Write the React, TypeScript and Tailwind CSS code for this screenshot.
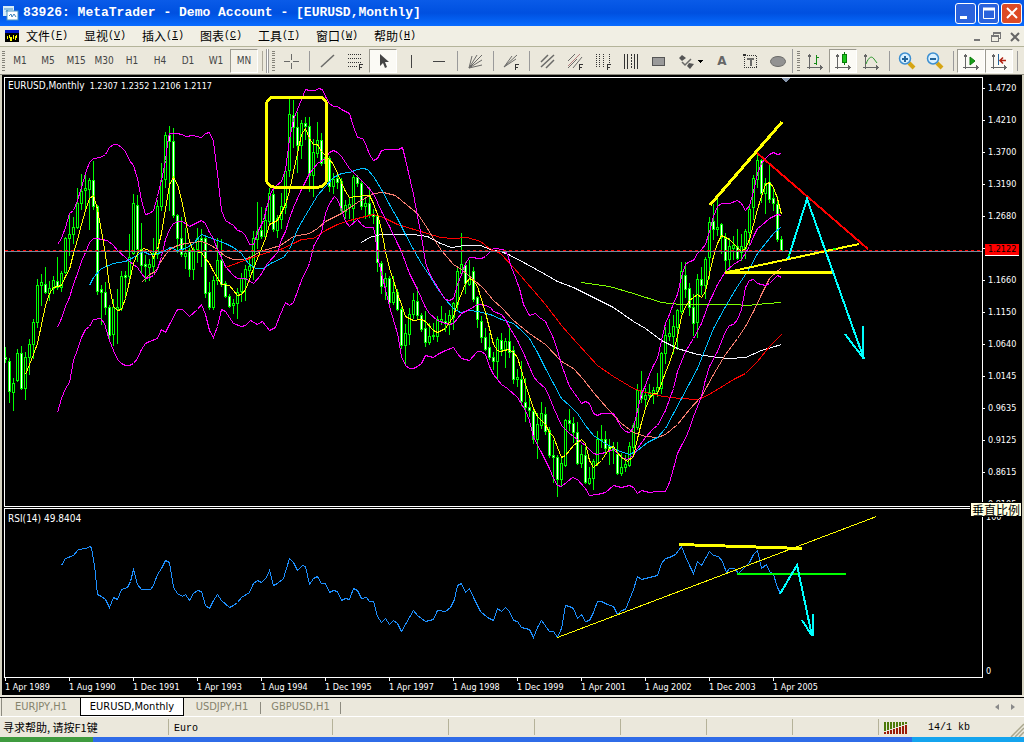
import React from 'react';
import clsx from 'clsx';

// high, body top, body bottom, low, falling (1) or rising (0)
const CANDLES: number[][] = [
  [347, 357, 359, 362, 1], [358, 361, 391, 402, 1], [378, 383, 392, 410, 0], [349, 353, 380, 381, 0], [346, 353, 388, 389, 1],
  [352, 357, 388, 399, 0], [339, 344, 357, 374, 0], [319, 322, 344, 358, 0], [279, 285, 322, 327, 0], [274, 282, 285, 305, 0],
  [267, 284, 292, 293, 1], [281, 288, 293, 300, 0], [276, 280, 288, 293, 0], [257, 281, 287, 289, 1], [271, 273, 287, 291, 0],
  [237, 238, 272, 273, 0], [214, 234, 238, 255, 0], [217, 227, 234, 243, 0], [188, 203, 227, 228, 0], [174, 191, 203, 209, 0],
  [172, 188, 190, 209, 0], [178, 180, 189, 229, 0], [161, 180, 206, 209, 1], [205, 206, 291, 294, 1], [285, 289, 292, 324, 1],
  [282, 292, 307, 314, 1], [305, 307, 335, 339, 1], [299, 307, 334, 345, 0], [289, 307, 309, 343, 0], [271, 276, 308, 310, 0],
  [271, 275, 277, 299, 1], [234, 257, 276, 278, 0], [194, 203, 253, 254, 0], [195, 205, 249, 261, 1], [223, 249, 265, 273, 1],
  [255, 264, 266, 281, 1], [259, 264, 267, 280, 0], [238, 253, 266, 272, 0], [200, 206, 254, 258, 0], [163, 180, 206, 210, 0],
  [132, 135, 179, 187, 0], [126, 135, 141, 210, 1], [128, 141, 215, 217, 1], [214, 215, 238, 252, 1], [217, 238, 254, 256, 1],
  [228, 253, 256, 268, 0], [248, 250, 269, 276, 1], [247, 249, 269, 279, 0], [228, 238, 249, 262, 0], [229, 238, 240, 266, 1],
  [235, 238, 293, 297, 1], [282, 292, 307, 309, 1], [276, 280, 307, 309, 0], [238, 260, 280, 284, 0], [239, 260, 284, 286, 1],
  [281, 283, 296, 297, 1], [294, 296, 306, 307, 1], [299, 303, 305, 313, 0], [288, 292, 303, 318, 0], [273, 278, 291, 301, 0],
  [265, 269, 279, 300, 0], [256, 266, 270, 276, 0], [231, 238, 267, 279, 0], [202, 231, 239, 248, 0], [207, 230, 236, 238, 1],
  [208, 220, 236, 239, 0], [188, 193, 221, 223, 0], [188, 194, 229, 231, 1], [215, 218, 230, 237, 0], [193, 206, 219, 228, 0],
  [166, 171, 207, 213, 0], [99, 114, 170, 176, 0], [100, 115, 127, 147, 1], [112, 127, 145, 172, 1], [120, 123, 145, 158, 0],
  [117, 123, 126, 139, 1], [117, 126, 175, 191, 1], [139, 152, 175, 196, 0], [122, 140, 153, 157, 0], [133, 140, 163, 165, 1],
  [151, 157, 163, 176, 0], [156, 158, 186, 191, 1], [173, 179, 186, 193, 0], [176, 178, 182, 188, 1], [178, 181, 210, 213, 1],
  [200, 205, 211, 218, 0], [198, 204, 207, 218, 0], [175, 177, 208, 221, 0], [175, 177, 183, 186, 1], [180, 183, 206, 209, 1],
  [198, 203, 206, 218, 0], [187, 203, 214, 217, 1], [209, 214, 216, 223, 1], [213, 216, 262, 271, 1], [261, 263, 286, 293, 1],
  [273, 278, 286, 299, 0], [276, 278, 302, 304, 1], [276, 292, 302, 304, 0], [289, 292, 309, 310, 1], [307, 309, 345, 348, 1],
  [324, 333, 345, 363, 0], [308, 314, 334, 344, 0], [293, 300, 314, 318, 0], [287, 301, 315, 318, 1], [313, 315, 329, 331, 1],
  [311, 328, 342, 346, 1], [323, 336, 342, 344, 0], [323, 335, 336, 339, 0], [316, 319, 336, 341, 0], [306, 319, 321, 324, 0],
  [313, 321, 323, 331, 1], [310, 315, 324, 334, 0], [302, 303, 317, 329, 0], [268, 271, 304, 309, 0], [233, 264, 273, 274, 0],
  [262, 265, 283, 293, 1], [260, 279, 284, 285, 0], [267, 271, 299, 301, 1], [296, 297, 319, 327, 1], [316, 321, 337, 342, 1],
  [328, 337, 349, 350, 1], [333, 347, 357, 359, 1], [352, 357, 361, 369, 1], [337, 339, 361, 378, 0], [333, 340, 349, 355, 1],
  [338, 341, 349, 367, 0], [325, 341, 352, 357, 1], [346, 350, 379, 383, 1], [369, 377, 379, 386, 0], [361, 379, 401, 405, 1],
  [378, 402, 407, 421, 1], [396, 407, 410, 416, 1], [407, 411, 439, 443, 1], [413, 424, 439, 458, 0], [402, 413, 425, 428, 0],
  [407, 414, 431, 434, 1], [427, 430, 455, 457, 1], [440, 455, 457, 482, 1], [455, 457, 479, 496, 1], [458, 463, 479, 486, 0],
  [419, 420, 465, 466, 0], [409, 420, 423, 430, 1], [417, 423, 432, 442, 1], [422, 432, 463, 464, 1], [445, 454, 463, 467, 0],
  [447, 455, 482, 483, 1], [467, 478, 483, 484, 0], [459, 461, 478, 489, 0], [431, 439, 463, 465, 0], [425, 439, 440, 447, 0],
  [431, 439, 448, 453, 1], [439, 446, 449, 464, 1], [442, 448, 450, 463, 0], [442, 454, 473, 474, 1], [453, 467, 473, 475, 0],
  [455, 464, 467, 471, 0], [442, 446, 465, 466, 0], [423, 425, 447, 455, 0], [384, 390, 427, 429, 0], [371, 390, 398, 402, 1],
  [388, 395, 399, 407, 0], [384, 392, 395, 398, 0], [387, 390, 393, 403, 0], [373, 387, 391, 396, 0], [352, 353, 388, 393, 0],
  [327, 335, 353, 363, 0], [319, 333, 336, 340, 0], [315, 326, 336, 353, 0], [309, 310, 327, 349, 0], [262, 271, 311, 313, 0],
  [262, 275, 289, 297, 1], [283, 288, 307, 315, 1], [294, 307, 323, 335, 1], [274, 279, 322, 337, 0], [267, 279, 285, 294, 1],
  [257, 259, 285, 298, 0], [217, 222, 257, 278, 0], [204, 221, 229, 239, 1], [198, 227, 229, 235, 0], [223, 224, 237, 253, 1],
  [233, 238, 260, 273, 1], [238, 246, 259, 273, 0], [236, 245, 248, 259, 0], [229, 246, 258, 259, 1], [234, 246, 252, 260, 0],
  [229, 231, 248, 258, 0], [204, 209, 232, 245, 0], [175, 178, 207, 219, 0], [153, 160, 179, 187, 0], [159, 160, 193, 202, 1],
  [178, 183, 193, 213, 0], [165, 182, 199, 202, 1], [188, 198, 203, 210, 1], [196, 204, 239, 241, 1], [236, 239, 251, 251, 1],
];

const BAND_UPPER =
  '57,244 61,238 65,227 69,213 73,210 77,200 81,187 85,173 89,162 93,158 100,157 105,154 109,147 113,144 117,144 121,147 125,151 129,160 133,165 137,178 141,200 145,214 149,213 153,210 157,196 161,180 165,160 167,143 169,133 177,133 181,134 186,136 192,135 201,137 205,133 209,132 213,141 217,173 221,210 225,220 233,225 237,230 241,231 245,235 249,244 253,244 258,230 263,220 267,204 271,191 276,185 281,181 285,169 289,139 293,119 297,109 301,99 305,89 309,90 315,90 318,88 322,89 325,96 329,103 333,106 337,106 341,109 349,113 353,126 357,137 362,138 365,143 369,154 373,160 377,158 381,150 387,149 398,149 402,147 405,159 413,194 417,216 421,236 425,262 429,273 433,280 441,293 445,299 449,300 453,298 457,284 461,274 465,263 469,257 473,257 477,258 481,258 485,256 489,252 493,248 503,249 507,254 511,267 515,277 519,288 523,304 529,315 535,313 539,317 545,321 553,338 557,350 561,364 565,375 569,386 577,397 581,403 585,401 589,403 593,413 597,415 601,413 613,413 617,420 621,427 625,431 629,432 633,427 637,410 641,393 645,385 649,374 653,365 657,358 661,340 665,323 669,314 673,303 677,294 681,276 685,264 689,261 693,260 697,253 701,249 705,244 709,231 713,216 717,206 721,203 729,203 737,200 741,203 745,210 749,205 753,191 757,173 761,163 765,158 769,154 773,152 777,154 781,153';
const BAND_MIDDLE =
  '57,327 61,318 65,306 69,297 73,284 77,273 81,261 85,252 89,242 93,238 97,238 101,239 107,240 113,245 117,250 125,257 129,261 137,267 141,273 145,278 149,277 153,275 157,269 161,256 165,239 169,229 173,223 178,221 182,221 189,226 197,222 201,220 205,223 209,232 213,238 217,249 221,257 225,266 233,275 237,278 245,278 253,283 260,275 267,263 277,252 281,239 285,231 289,218 293,207 301,189 305,181 309,173 317,163 325,158 329,152 333,150 337,152 341,156 349,168 357,176 365,184 373,193 381,211 389,226 397,243 401,251 405,262 409,273 417,289 421,298 425,307 429,313 437,320 445,323 449,324 453,323 461,313 469,309 477,304 485,305 490,307 493,311 501,314 505,319 509,327 517,340 525,357 533,376 537,381 545,388 549,397 553,407 561,425 569,433 577,439 585,445 593,453 597,454 605,452 613,449 621,457 627,459 633,455 637,448 645,437 653,428 657,425 665,410 673,388 677,371 685,351 693,338 701,323 709,301 713,293 717,284 725,271 733,264 741,259 749,246 753,236 757,228 761,225 769,218 777,214 781,215';
const BAND_LOWER =
  '57,412 61,398 65,388 69,382 73,360 77,349 81,337 85,329 89,326 93,319 100,318 104,323 109,340 113,350 117,359 121,363 125,365 129,365 133,363 137,358 141,349 145,343 149,341 157,338 161,329 165,332 169,324 177,309 182,309 189,316 197,309 201,304 205,314 209,330 213,337 217,326 221,309 225,311 233,323 241,326 245,325 250,320 257,324 262,321 269,330 275,327 279,316 285,302 289,305 293,302 301,280 309,263 313,246 317,239 321,232 325,213 329,203 334,196 337,199 341,209 345,221 349,226 357,219 361,224 365,227 373,227 375,236 377,256 381,273 385,289 389,306 397,333 401,356 405,365 409,368 413,368 417,366 421,363 425,355 433,357 437,354 445,350 453,347 457,353 461,358 469,360 477,351 481,351 485,354 489,366 493,374 501,384 507,388 517,397 525,410 529,420 533,437 541,452 549,468 553,478 557,485 561,486 572,477 577,479 585,488 589,495 597,494 605,492 613,485 621,487 629,485 633,487 637,493 641,490 649,492 657,491 665,491 669,482 673,468 677,453 681,445 685,438 689,428 693,416 701,396 705,379 709,366 717,351 725,331 729,325 733,324 737,319 741,309 745,287 749,280 753,279 757,283 765,285 769,283 777,275 781,277';
const MA_YELLOW =
  '25,374 33,354 37,343 41,324 45,305 49,293 53,287 61,285 65,276 69,269 73,253 77,239 81,224 85,210 89,198 93,195 97,209 101,231 105,254 109,286 113,306 117,310 121,309 125,298 129,281 133,263 137,253 143,248 149,250 153,257 157,249 161,233 165,209 169,184 173,177 177,184 181,199 185,219 189,241 193,251 201,252 205,258 209,263 213,271 221,284 229,285 237,295 241,294 245,289 249,279 253,268 259,253 265,238 269,224 277,220 285,204 289,191 293,171 297,153 301,134 305,128 309,138 313,144 317,144 321,151 329,159 333,164 341,182 345,191 349,197 357,196 365,195 369,195 373,203 377,214 381,229 385,251 389,268 393,280 397,293 401,304 405,316 413,320 421,319 425,321 433,330 437,332 445,328 453,316 457,303 461,293 465,283 469,278 473,280 477,286 481,299 485,312 489,328 493,344 497,350 500,351 508,349 513,352 517,357 521,370 525,384 533,408 537,416 545,424 549,432 553,436 557,447 561,457 565,455 573,445 581,439 585,443 589,460 593,467 601,460 609,448 613,446 617,452 621,457 627,461 633,456 637,438 641,422 645,408 649,398 653,393 657,393 661,383 665,372 669,362 673,350 677,336 681,316 685,306 689,300 697,294 701,297 705,291 709,273 713,256 717,243 721,235 725,237 729,239 741,251 745,248 749,239 753,224 757,209 761,196 765,184 769,182 773,187 777,198 781,214';
const MA_BLUE =
  '89,285 93,277 101,268 113,263 125,261 133,257 143,251 149,254 153,254 161,252 170,247 177,250 185,248 193,243 201,234 209,237 217,240 225,243 233,247 241,253 248,263 255,268 263,268 270,263 283,257 289,249 297,229 305,215 317,195 325,186 333,177 341,173 349,172 357,169 363,168 367,169 373,176 381,189 389,204 397,218 405,234 413,249 421,263 429,275 437,288 445,299 453,308 460,312 469,310 477,311 490,314 501,319 513,323 521,330 529,338 537,352 545,368 553,383 561,398 569,405 577,413 585,425 593,435 605,443 617,450 629,454 637,450 647,442 657,437 665,428 673,413 681,398 689,383 697,368 705,348 713,328 725,306 737,286 749,268 757,253 765,243 773,233 781,226';
const MA_SALMON =
  '141,282 149,274 155,271 161,260 169,249 177,245 185,243 201,241 209,244 217,249 225,256 233,259 241,259 250,257 260,251 280,245 293,236 309,233 317,228 325,221 341,213 357,202 373,193 383,192 395,195 407,205 417,213 425,225 433,238 441,250 453,264 461,269 473,279 483,288 493,300 501,307 513,320 529,333 545,344 561,361 573,368 583,379 593,392 607,408 621,423 633,432 645,436 657,437 665,434 677,424 689,409 701,396 713,374 725,354 737,338 745,326 753,311 761,294 769,278 781,267';
const MA_RED =
  '225,267 241,261 258,255 267,252 280,249 293,243 301,239 313,238 325,230 337,224 349,220 365,216 373,214 383,217 397,224 417,230 440,237 453,238 467,237 480,241 489,248 500,253 513,267 533,290 545,304 561,325 577,343 597,365 613,376 633,388 645,392 663,396 680,398 697,399 705,396 717,389 733,379 745,373 757,361 769,346 781,334';
const MA_WHITE =
  '361,242 369,237 380,234 413,234 427,236 440,243 451,247 464,245 480,245 490,249 500,251 508,254 525,263 545,274 557,281 573,287 593,297 613,307 633,321 645,328 661,340 677,348 697,354 717,357 729,358 745,357 761,350 781,344';
const MA_GREEN = '581,282 609,286 633,293 661,302 680,304 733,304 747,305 767,303 781,302';
const RSI =
  '61,565 65,558 73,555 78,549 86,548 89,546 91,547 94,565 97,594 101,596 105,599 109,607 113,597 117,599 121,589 127,587 130,581 133,569 137,584 141,589 150,589 153,585 157,574 161,568 165,560 169,562 173,587 177,593 182,596 185,594 189,600 193,593 197,590 201,591 205,605 209,608 213,600 217,594 221,600 229,607 233,605 237,602 241,597 249,592 253,583 257,580 261,582 266,577 269,570 273,585 277,583 283,578 289,558 293,562 297,570 302,565 305,566 309,584 313,578 317,576 321,583 325,583 329,592 333,590 337,591 341,600 345,598 349,599 353,588 357,590 361,598 366,597 369,601 373,601 377,616 381,622 385,618 389,624 393,620 397,623 401,631 405,624 409,617 413,610 417,615 425,621 433,619 437,610 445,611 450,607 454,599 457,585 461,583 465,592 469,588 473,597 480,611 487,617 493,620 497,608 501,611 505,607 509,611 513,620 517,621 521,627 529,629 533,637 537,627 541,620 549,631 553,631 557,637 561,628 565,605 569,606 573,608 577,618 581,614 585,621 589,620 593,612 597,601 601,601 607,604 613,606 617,614 621,610 625,609 629,599 633,589 637,576 641,579 657,575 661,563 665,558 669,557 675,554 678,550 681,546 685,556 689,565 693,573 697,561 701,565 705,558 709,551 713,555 718,556 722,561 726,572 729,568 734,568 738,573 743,568 749,562 753,554 757,550 761,568 766,564 769,571 773,574 777,587 780,593';

const PRICES = ['1.4720', '1.4210', '1.3700', '1.3190', '1.2680', '1.2122', '1.1660', '1.1150', '1.0640', '1.0145', '0.9635', '0.9125', '0.8615', '0.8105'];
const DATES = ['1 Apr 1989', '1 Aug 1990', '1 Dec 1991', '1 Apr 1993', '1 Aug 1994', '1 Dec 1995', '1 Apr 1997', '1 Aug 1998', '1 Dec 1999', '1 Apr 2001', '1 Aug 2002', '1 Dec 2003', '1 Apr 2005'];
const MENUS = [['文件', 'F'], ['显视', 'V'], ['插入', 'I'], ['图表', 'C'], ['工具', 'T'], ['窗口', 'W'], ['帮助', 'H']];
const PERIODS = ['M1', 'M5', 'M15', 'M30', 'H1', 'H4', 'D1', 'W1', 'MN'];

const UI = "font-['DejaVu_Sans_Condensed','DejaVu_Sans',sans-serif]";

function Line({ points, color }: { points: string; color: string }) {
  return <polyline points={points} fill="none" stroke={color} strokeWidth="1" />;
}

function PricePlot() {
  return (
    <svg className="block h-[428px] w-full" shapeRendering="crispEdges" role="img" aria-label="EURUSD">
      <g transform="translate(-5 -78)">
        <g>
          {CANDLES.map(([high, top, bottom, low, falling], i) => {
            const x = 5 + i * 4;
            return (
              <g key={i}>
                <rect x={x} y={high} width="1" height={low - high + 1} fill="#00ff00" />
                <rect x={x - 1} y={top} width="3" height={bottom - top + 1} fill="#00ff00" />
                {bottom - top > 1 && (
                  <rect x={x} y={top + 1} width="1" height={bottom - top - 1} fill={falling ? '#ffffff' : '#000000'} />
                )}
              </g>
            );
          })}
        </g>
        <g transform="translate(0.5 0.5)">
          <Line points={MA_GREEN} color="#7fff00" />
          <Line points={MA_WHITE} color="#f5f5ff" />
          <Line points={MA_RED} color="#ff0000" />
          <Line points={MA_SALMON} color="#fa8072" />
          <Line points={MA_BLUE} color="#00bfff" />
          <Line points={BAND_UPPER} color="#ff00ff" />
          <Line points={BAND_MIDDLE} color="#ff00ff" />
          <Line points={BAND_LOWER} color="#ff00ff" />
          <Line points={MA_YELLOW} color="#ffff00" />
        </g>
        <rect x="5" y="251" width="100%" height="1" fill="#778899" />
        <line x1="5" y1="250.5" x2="3000" y2="250.5" stroke="#ff0000" strokeDasharray="3 3" />
        <path d="M782 78h8l-4 5z" fill="#8796ac" />
        <g fill="none">
          <rect x="266.5" y="97" width="60" height="90" rx="8" stroke="#ffff00" strokeWidth="3" />
          <path d="M710 205L782 122" stroke="#ffff00" strokeWidth="3" />
          <path d="M757 153L868 249" stroke="#ff0000" strokeWidth="2" />
          <path d="M725 272.5H834" stroke="#ffff00" strokeWidth="3" />
          <path d="M728 272L859 244" stroke="#ffff00" strokeWidth="2" />
          <path d="M788 259L807 199L864 359M845 334L864 359M863 326V358" stroke="#00ffff" strokeWidth="2" />
          <path d="M833 249H836M788 255H790" stroke="#00ff00" strokeWidth="2" />
        </g>
      </g>
    </svg>
  );
}

function RsiPlot() {
  return (
    <svg className="block h-[168px] w-full" shapeRendering="crispEdges" role="img" aria-label="RSI">
      <g transform="translate(-5 -509)" fill="none">
        <g transform="translate(0.5 0.5)">
          <Line points={RSI} color="#1e90ff" />
          <Line points="557,637 876,516" color="#ffff00" />
        </g>
        <path d="M679 544.5L802 548.5" stroke="#ffff00" strokeWidth="3" />
        <path d="M737 574H846" stroke="#00ff00" strokeWidth="2" />
        <path d="M780 594L797 565L812 636M802 620L812 636M813 614V636" stroke="#00ffff" strokeWidth="2" />
      </g>
    </svg>
  );
}

function Glyph({ children, wide }: { children: React.ReactNode; wide?: boolean }) {
  return (
    <svg
      className={wide ? 'h-5 w-7' : 'h-5 w-5'}
      viewBox={wide ? '0 0 28 20' : '0 0 20 20'}
      fill="none"
      stroke="#6a6a68"
      shapeRendering="crispEdges"
      aria-hidden="true"
    >
      {children}
    </svg>
  );
}

function Tool({ label, pressed, wide, children }: { label: string; pressed?: boolean; wide?: boolean; children: React.ReactNode }) {
  return (
    <button
      type="button"
      aria-label={label}
      aria-pressed={pressed}
      className={clsx(
        'flex h-6 shrink-0 items-center justify-center border',
        wide ? 'w-[35px]' : 'w-7',
        pressed ? 'border-[#9c9a90] border-r-white border-b-white bg-[#fbfaf5]' : 'border-transparent'
      )}
    >
      {children}
    </button>
  );
}

function Sep() {
  return (
    <span className="flex h-6 w-2 shrink-0 justify-center">
      <span className="h-5 w-px self-center bg-[#9a9a9a]" />
    </span>
  );
}

function Grip() {
  return (
    <span className="flex h-5 w-[3px] shrink-0 flex-col justify-between">
      {[0, 1, 2, 3, 4, 5, 6, 7, 8].map((n) => (
        <span key={n} className="h-px w-full bg-[#85837a]" />
      ))}
    </span>
  );
}

const F_MARK = <path d="M14.5 19V13M14 13.5H18M14 16.5H17" stroke="#333" />;
const AXES = <path d="M4.5 18V4M2.5 6.5L4.5 4L6.5 6.5M2 16.5H17M15 14.5L17 16.5L15 18.5" stroke="#666" />;

function Toolbar() {
  return (
    <div className="flex h-7 items-center overflow-hidden border-b border-b-[#8d8b80] pl-0.5">
      <Grip />
      <div className="flex pl-px">
        {PERIODS.map((p) => (
          <button
            key={p}
            type="button"
            aria-pressed={p === 'MN'}
            className={clsx(
              'h-6 w-7 shrink-0 border text-[10px] text-[#444]',
              UI,
              p === 'MN' ? 'border-[#9c9a90] border-r-white border-b-white bg-[#f3f1e8]' : 'border-transparent'
            )}
          >
            {p}
          </button>
        ))}
      </div>
      <span className="flex h-6 w-[19px] shrink-0 items-center justify-between pr-0.5 pl-1">
        <span className="h-5 w-px bg-[#aca899]" />
        <span className="h-6 w-[3px] border-x border-[#9a9a9a] bg-white" />
        <Grip />
      </span>
      <Tool label="Crosshair"><Glyph><path d="M3 10.5H9M12 10.5H18M10.5 3V9M10.5 12V18" /></Glyph></Tool>
      <Sep />
      <Tool label="Trendline"><Glyph><path d="M4 16L17 4" strokeWidth="1.5" shapeRendering="auto" /></Glyph></Tool>
      <Tool label="Fibonacci retracement">
        <Glyph><path d="M3 3.5H17M3 7.5H17M3 11.5H17M3 15.5H13" strokeDasharray="1 1" stroke="#333" />{F_MARK}</Glyph>
      </Tool>
      <Tool label="Cursor" pressed>
        <Glyph><path d="M7 3V15L10 12L12 17L14 16L12 11H16Z" fill="#444" stroke="none" shapeRendering="auto" /></Glyph>
      </Tool>
      <Tool label="Vertical line"><Glyph><path d="M10.5 4V17" stroke="#444" /></Glyph></Tool>
      <Tool label="Horizontal line"><Glyph><path d="M4 10.5H16" stroke="#444" /></Glyph></Tool>
      <Sep />
      <Tool label="Gann fan">
        <Glyph><path d="M4 17L7 5M4 17L12 4M4 17L17 4M4 17L17 9M4 17L17 14" shapeRendering="auto" /></Glyph>
      </Tool>
      <Sep />
      <Tool label="Fibonacci fan">
        <Glyph><path d="M3 16L11 5M3 16L16 4M3 16L15 8" shapeRendering="auto" />{F_MARK}</Glyph>
      </Tool>
      <Sep />
      <Tool label="Equidistant channel">
        <Glyph><path d="M4 11L11 4M4 16L17 4M9 17L17 9" strokeWidth="1.5" shapeRendering="auto" /></Glyph>
      </Tool>
      <Tool label="Regression channel">
        <Glyph>
          <path d="M3 10L10 3M3 17L12 8M8 17L17 6" shapeRendering="auto" />
          <path d="M3 15L15 3" stroke="#b58080" shapeRendering="auto" />
          {F_MARK}
        </Glyph>
      </Tool>
      <Tool label="Fibonacci time zones">
        <Glyph><path d="M3.5 3V17M6.5 3V17M10.5 3V17M16.5 3V12" strokeDasharray="1 1" stroke="#333" />{F_MARK}</Glyph>
      </Tool>
      <Tool label="Cycle lines">
        <Glyph><path d="M3.5 3V18M6.5 3V18M13.5 3V18M16.5 3V18" stroke="#333" /><path d="M10.5 3V18" strokeDasharray="2 1" stroke="#333" /></Glyph>
      </Tool>
      <Tool label="Rectangle"><Glyph><rect x="3.5" y="6.5" width="12" height="8" fill="#9a9a9a" stroke="#555" /></Glyph></Tool>
      <Tool label="Arrows" wide>
        <Glyph wide>
          <path d="M5 4L9 7L5 10L2 7ZM12 12L17 13L13 18L10 15Z" fill="#555" stroke="none" shapeRendering="auto" />
          <path d="M5 11L8 14L14 8" strokeWidth="1.5" shapeRendering="auto" />
          <path d="M20 9H26L23 12Z" fill="#000" stroke="none" />
        </Glyph>
      </Tool>
      <Tool label="Text"><span className="font-['DejaVu_Sans',sans-serif] text-[12px] font-bold text-[#666]">A</span></Tool>
      <Tool label="Text label">
        <Glyph><rect x="4.5" y="4.5" width="12" height="12" strokeDasharray="1 1" stroke="#333" /><path d="M7 8H14M10.5 7V15" strokeWidth="2" /><path d="M3 4H6" stroke="#333" strokeWidth="2" /></Glyph>
      </Tool>
      <Tool label="Ellipse"><Glyph><ellipse cx="10" cy="10.5" rx="7.5" ry="5" fill="#929292" shapeRendering="auto" /></Glyph></Tool>
      <span className="flex h-6 w-[9px] shrink-0 items-center gap-1">
        <span className="h-6 w-px bg-[#9a9a9a]" />
        <Grip />
      </span>
      <Tool label="Bar chart"><Glyph>{AXES}<path d="M11.5 4V14M9 12.5H12M12 6.5H14" stroke="#158a15" /></Glyph></Tool>
      <Tool label="Candlesticks" pressed>
        <Glyph>{AXES}<path d="M11.5 1V14" stroke="#0a7a0a" /><rect x="9.5" y="3.5" width="4" height="8" fill="#19c519" stroke="#0a7a0a" /></Glyph>
      </Tool>
      <Tool label="Line chart"><Glyph>{AXES}<path d="M5 13C8 5 11 5 13 8L16 12" stroke="#2d962d" shapeRendering="auto" /></Glyph></Tool>
      <Sep />
      <Tool label="Zoom in">
        <Glyph>
          <path d="M12 12L17 17" stroke="#d6a514" strokeWidth="4" shapeRendering="auto" />
          <circle cx="8" cy="7.5" r="5.5" fill="#d9f0ff" stroke="#3d8fd0" strokeWidth="1.5" shapeRendering="auto" />
          <path d="M5 8H11M8 5V11" stroke="#24669c" strokeWidth="2" />
        </Glyph>
      </Tool>
      <Tool label="Zoom out">
        <Glyph>
          <path d="M12 12L17 17" stroke="#d6a514" strokeWidth="4" shapeRendering="auto" />
          <circle cx="8" cy="7.5" r="5.5" fill="#d9f0ff" stroke="#3d8fd0" strokeWidth="1.5" shapeRendering="auto" />
          <path d="M5 8H11" stroke="#24669c" strokeWidth="2" />
        </Glyph>
      </Tool>
      <Sep />
      <Tool label="Auto scroll" pressed><Glyph>{AXES}<path d="M9 6L14 10L9 14Z" fill="#18a018" stroke="#0a7a0a" shapeRendering="auto" /></Glyph></Tool>
      <Tool label="Chart shift" pressed>
        <Glyph>{AXES}<path d="M9.5 3V14" stroke="#24669c" /><path d="M11 9.5H17M14 6.5L11 9.5L14 12.5" stroke="#b02010" strokeWidth="1.5" shapeRendering="auto" /></Glyph>
      </Tool>
      <Sep />
    </div>
  );
}

function TitleBar() {
  const box = 'flex h-[21px] w-[21px] items-center justify-center rounded-[3px] border border-white text-white';
  return (
    <header className="flex h-[26px] items-center bg-linear-to-b from-[#0a5be8] via-[#0050e0] via-50% to-[#0a6cff] pr-0.5 pl-[3px]">
      <svg className="h-4 w-4 shrink-0" viewBox="0 0 16 16" aria-hidden="true">
        <rect x="0" y="1" width="11" height="10" fill="#d7ecf8" />
        <path d="M1 4H10M3 7L4 5L6 8" stroke="#4d95c4" fill="none" />
        <rect x="4" y="6" width="11" height="9" fill="#fff" stroke="#4d95c4" />
        <path d="M6 11L8 9L9 12L11 9L13 12" stroke="#3e86bd" fill="none" />
      </svg>
      <h1 className="min-w-0 flex-1 truncate pl-1 font-['Liberation_Mono',monospace] text-[13px] font-bold text-white">
        83926: MetaTrader - Demo Account - [EURUSD,Monthly]
      </h1>
      <div className="flex shrink-0 gap-0.5">
        <button type="button" aria-label="Minimize" className={clsx(box, 'bg-[#2a62dc]')}>
          <svg className="h-4 w-4" viewBox="0 0 16 16"><path d="M2 12.5H9" stroke="#fff" strokeWidth="3" /></svg>
        </button>
        <button type="button" aria-label="Maximize" className={clsx(box, 'bg-[#2a62dc]')}>
          <svg className="h-4 w-4" viewBox="0 0 16 16" fill="none" stroke="#fff"><path d="M2.5 3V13.5H13.5V3" /><path d="M2 4H14" strokeWidth="3" /></svg>
        </button>
        <button type="button" aria-label="Close" className={clsx(box, 'bg-[#dd4a25]')}>
          <svg className="h-4 w-4" viewBox="0 0 16 16"><path d="M3 3L13 13M13 3L3 13" stroke="#fff" strokeWidth="2" /></svg>
        </button>
      </div>
    </header>
  );
}

function MenuBar() {
  return (
    <nav className="flex h-[21px] items-center border-b border-b-[#b4b49a] bg-[#f1efe4] pl-[5px]">
      <svg className="h-3 w-3.5 shrink-0" viewBox="0 0 14 12" shapeRendering="crispEdges" aria-hidden="true">
        <rect width="14" height="12" fill="#000" />
        <rect width="14" height="3" fill="#0018c8" />
        <path d="M2.5 6V9M4.5 5V8M5.5 7V11M6.5 7V11M8.5 5V9M10.5 6V10M11.5 5V8" stroke="#ffff00" />
      </svg>
      <div className="flex flex-1">
        {MENUS.map(([name, key]) => (
          <button key={key} type="button" className="flex w-[58px] items-center pl-[7px] font-['Noto_Sans_CJK_SC',sans-serif] text-[12px] leading-5 whitespace-nowrap text-black">
            {name}
            <span className="font-['Liberation_Mono',monospace] text-[10px]">(<u>{key}</u>)</span>
          </button>
        ))}
      </div>
      <div className="flex gap-0.5 self-end pr-px">
        <button type="button" aria-label="Minimize chart" className="flex h-[18px] w-[17px] items-center justify-center">
          <svg className="h-2.5 w-2.5" viewBox="0 0 10 10"><path d="M2 8H8" stroke="#777" strokeWidth="2" /></svg>
        </button>
        <button type="button" aria-label="Restore chart" className="flex h-[18px] w-[17px] items-center justify-center">
          <svg className="h-2.5 w-2.5" viewBox="0 0 10 10" fill="none" stroke="#777" shapeRendering="crispEdges"><path d="M2.5 3V0.5H9.5V6.5H8M0.5 3.5H7.5V9.5H0.5ZM1 4.5H7M3 1.5H9" /></svg>
        </button>
        <button type="button" aria-label="Close chart" className="flex h-[18px] w-[17px] items-center justify-center">
          <svg className="h-2.5 w-2.5" viewBox="0 0 10 10"><path d="M1 1L9 9M9 1L1 9" stroke="#666" strokeWidth="2" /></svg>
        </button>
      </div>
    </nav>
  );
}

function Chart() {
  return (
    <main className={clsx('relative border-x-2 border-[#d5d2c0] bg-black pt-0.5 pl-0.5 text-[9px] leading-3 text-white', UI)}>
      <div className="flex">
        <div className="relative min-w-0 flex-1 border border-white">
          <PricePlot />
          <div className="absolute top-0.5 left-[3px] flex gap-[3px] whitespace-pre">
            <span className="mr-0.5 text-[10px]">EURUSD,Monthly</span>
            <span>1.2307</span>
            <span>1.2352</span>
            <span>1.2106</span>
            <span>1.2117</span>
          </div>
        </div>
        <div className="h-[430px] w-[39px] shrink-0 overflow-hidden pt-[5px]">
          {PRICES.map((p) => (
            <div key={p} className="flex h-8 items-start">
              <span className="mt-1.5 h-px w-0.5 shrink-0 bg-white" />
              {p === '1.2122' ? (
                <span className="mt-0.5 w-[34px] border-b border-white bg-[#ff0000] pl-[3px] leading-[11px] text-black">{p}</span>
              ) : (
                <span className="pl-[3px]">{p}</span>
              )}
            </div>
          ))}
        </div>
      </div>
      <div className="mt-px flex">
        <div className="relative min-w-0 flex-1 border border-white">
          <RsiPlot />
          <span className="absolute top-1 left-[3px] text-[10px]">RSI(14) 49.8404</span>
        </div>
        <div className="flex w-[39px] shrink-0 flex-col justify-between pt-[3px] pb-px pl-[3px]">
          <span>100</span>
          <span>0</span>
        </div>
      </div>
      <div className="flex h-[17px] overflow-hidden pl-px">
        {DATES.map((d) => (
          <div key={d} className="w-16 shrink-0 whitespace-nowrap">
            <div className="h-[3px] w-px bg-white" />
            {d}
          </div>
        ))}
      </div>
      <div role="tooltip" className="absolute top-[427px] right-0 border border-black bg-[#ffffe1] px-px font-['Noto_Sans_CJK_SC',sans-serif] text-[12px] leading-[13px] text-black">
        垂直比例
      </div>
    </main>
  );
}

function Tabs() {
  return (
    <div className={clsx('mt-0.5 flex h-5 items-start border-t border-t-black border-b border-b-white text-[11px] text-[#85836c]', UI)}>
      <div role="tablist" className="flex flex-1">
        <button type="button" role="tab" aria-selected="false" className="ml-px h-[18px] w-[79px] border-l border-l-[#8d8b80]">EURJPY,H1</button>
        <button type="button" role="tab" aria-selected="true" className="h-[18px] w-[104px] border border-t-0 border-black bg-white pt-px whitespace-nowrap text-black">EURUSD,Monthly</button>
        <button type="button" role="tab" aria-selected="false" className="h-[18px] w-[76px]">USDJPY,H1</button>
        <span className="mt-1 h-3 w-px bg-[#8d8b80]" />
        <button type="button" role="tab" aria-selected="false" className="h-[18px] w-[79px]">GBPUSD,H1</button>
        <span className="mt-1 h-3 w-px bg-[#8d8b80]" />
      </div>
      <div className="flex gap-2.5 pt-1.5 pr-2">
        <button type="button" aria-label="Scroll tabs left"><svg className="h-1.5 w-1.5" viewBox="0 0 6 6"><path d="M5 0V6L1 3Z" fill="#8a8a8a" /></svg></button>
        <button type="button" aria-label="Scroll tabs right"><svg className="h-1.5 w-1.5" viewBox="0 0 6 6"><path d="M1 0V6L5 3Z" fill="#8a8a8a" /></svg></button>
      </div>
    </div>
  );
}

function StatusBar() {
  const cell = 'h-4 shrink-0 border-r border-r-[#b5b299]';
  return (
    <footer className="flex h-5 items-center font-['Liberation_Mono','Noto_Sans_CJK_SC',monospace] text-[10px] leading-5 whitespace-nowrap text-black">
      <span className={clsx(cell, "w-[169px] pl-[3px] font-['Noto_Sans_CJK_SC',sans-serif] text-[11px] leading-4")}>寻求帮助, 请按F1键</span>
      <span className={clsx(cell, 'w-[164px] pl-[5px]')}>Euro</span>
      <span className={clsx(cell, 'w-[116px]')} />
      <span className={clsx(cell, 'w-[86px]')} />
      <span className={clsx(cell, 'w-[86px]')} />
      <span className={clsx(cell, 'w-[86px]')} />
      <span className={clsx(cell, 'w-[86px]')} />
      <span className={clsx(cell, 'w-[86px]')} />
      <span className="flex min-w-0 flex-1 items-center gap-5 pt-0.5 pl-[5px]">
        <svg className="h-3 w-6 shrink-0" viewBox="0 0 24 12" shapeRendering="crispEdges" aria-hidden="true">
          {[0, 1, 2, 3, 4, 5, 6, 7].map((n) => (
            <g key={n}>
              <rect x={n * 3} y="0" width="2" height={9 - n} fill="#4d7a0a" />
              <rect x={n * 3} y={10 - n} width="2" height={2 + n} fill="#9c1c08" />
            </g>
          ))}
        </svg>
        14/1 kb
      </span>
      <svg className="h-3.5 w-3.5 shrink-0 self-end" viewBox="0 0 14 14" aria-hidden="true">
        <path d="M1 14L14 1M5 14L14 5M9 14L14 9" stroke="#aaa78f" strokeWidth="1.5" />
      </svg>
    </footer>
  );
}

export default function App() {
  return (
    <div className="flex min-h-screen flex-col overflow-x-hidden bg-[#ebe8dc]">
      <TitleBar />
      <MenuBar />
      <Toolbar />
      <Chart />
      <Tabs />
      <StatusBar />
      <div className="flex min-h-1 flex-1">
        <div className="w-[93px] bg-[#3f9b3f]" />
        <div className="flex-1 bg-[#2f6ce8]" />
        <div className="w-[112px] bg-[#14a4ee]" />
      </div>
    </div>
  );
}
